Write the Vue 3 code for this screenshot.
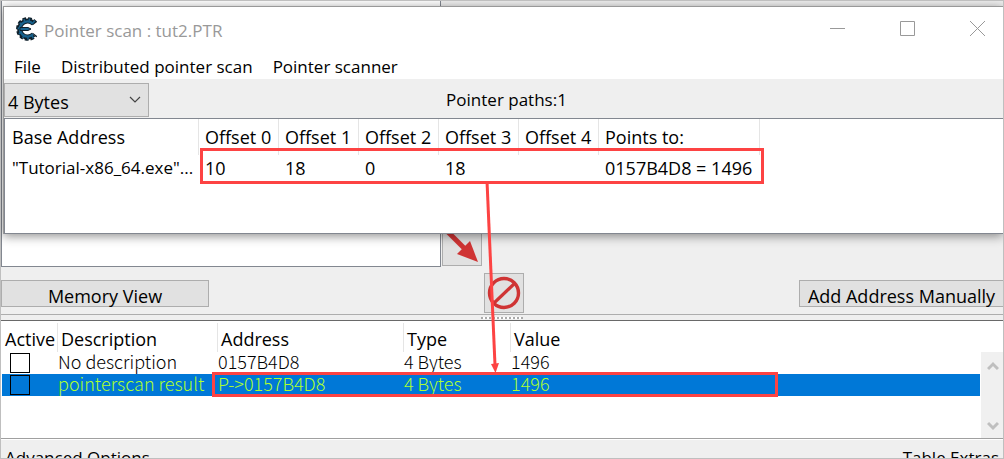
<script setup>
import { ref } from 'vue'

const valueType = ref('4 Bytes')
const valueTypes = ['Byte', '2 Bytes', '4 Bytes', '8 Bytes', 'Float', 'Double']
const menus = ['File', 'Distributed pointer scan', 'Pointer scanner']

const pathColumns = ['Base Address', 'Offset 0', 'Offset 1', 'Offset 2', 'Offset 3', 'Offset 4', 'Points to:']
const paths = [['"Tutorial-x86_64.exe"...', '10', '18', '0', '18', '', '0157B4D8 = 1496']]

const addressColumns = ['Active', 'Description', 'Address', 'Type', 'Value']
const entries = ref([
  { active: false, selected: false, description: 'No description', address: '0157B4D8', type: '4 Bytes', value: '1496' },
  { active: false, selected: true, description: 'pointerscan result', address: 'P->0157B4D8', type: '4 Bytes', value: '1496' }
])
</script>

<template>
  <div class="screen">
    <main class="main-window">
      <div class="results">
        <div class="found-list"></div>
        <button class="tool copy" type="button" aria-label="Add selected addresses">
          <svg width="38" height="38" viewBox="0 0 38 38">
            <path d="M3 3L22 22" stroke="#cf3434" stroke-width="5" />
            <path d="M27 14L14 27L35 35Z" fill="#cf3434" />
          </svg>
        </button>
      </div>

      <div class="actions">
        <button class="push memory" type="button">Memory View</button>
        <button class="tool stop" type="button" aria-label="Clear list">
          <svg width="38" height="38" viewBox="0 0 38 38">
            <circle cx="19" cy="19" r="14.5" fill="none" stroke="#cf3434" stroke-width="3.4" />
            <path d="M9 29L29 10" stroke="#cf3434" stroke-width="3.2" />
          </svg>
        </button>
        <button class="push manual" type="button">Add Address Manually</button>
      </div>

      <div class="splitter"><span class="grip"></span></div>

      <section class="address-list">
        <table class="address-table">
          <colgroup>
            <col class="c-active" /><col class="c-desc" /><col class="c-addr" /><col class="c-type" /><col />
          </colgroup>
          <thead>
            <tr><th v-for="c in addressColumns" :key="c" scope="col">{{ c }}</th></tr>
          </thead>
          <tbody>
            <tr v-for="e in entries" :key="e.description" :class="{ selected: e.selected }">
              <td class="tick"><input v-model="e.active" type="checkbox" :aria-label="'Active: ' + e.description" /></td>
              <td>{{ e.description }}</td>
              <td>{{ e.address }}</td>
              <td>{{ e.type }}</td>
              <td>{{ e.value }}</td>
            </tr>
          </tbody>
        </table>
        <div class="scrollbar">
          <button type="button" aria-label="Scroll up">
            <svg width="12" height="10" viewBox="0 0 12 10"><path d="M1 8L6 3L11 8" fill="none" stroke="#bfbfbf" stroke-width="3" /></svg>
          </button>
          <button type="button" aria-label="Scroll down">
            <svg width="12" height="10" viewBox="0 0 12 10"><path d="M1 2L6 7L11 2" fill="none" stroke="#bfbfbf" stroke-width="3" /></svg>
          </button>
        </div>
      </section>

      <footer class="footer">
        <a href="#advanced">Advanced Options</a>
        <a href="#extras">Table Extras</a>
      </footer>
    </main>

    <section class="scan-window">
      <header class="titlebar">
        <svg class="logo" width="22" height="24" viewBox="0 0 22 24">
          <g fill="none">
            <path d="M20 6.500A9 9 0 1 0 20 17.500" stroke="#10202b" stroke-width="5.600" stroke-dasharray="3.200 1.600" />
            <path d="M18.500 6.500A8 8 0 1 0 18.500 17.500" stroke="#10202b" stroke-width="5" />
            <path d="M20 6A9 9 0 1 0 20 18" stroke="#17618c" stroke-width="3.200" stroke-dasharray="1.400 3.400" stroke-dashoffset="-1" />
            <path d="M18 6.800A7.600 7.600 0 1 0 18 17.200" stroke="#17618c" stroke-width="2.400" />
          </g>
          <path d="M5 10.500H13L16 12L13 13.500H5Z" fill="#17618c" stroke="#10202b" />
        </svg>
        <h1>Pointer scan : tut2.PTR</h1>
        <div class="window-buttons">
          <button type="button" aria-label="Minimize">
            <svg width="15" height="15" viewBox="0 0 15 15"><path d="M0 7.5H15" stroke="#999" /></svg>
          </button>
          <button type="button" aria-label="Maximize">
            <svg width="15" height="15" viewBox="0 0 15 15"><path d="M.5 .5H14.5V14.5H.5Z" fill="none" stroke="#999" /></svg>
          </button>
          <button type="button" aria-label="Close">
            <svg width="15" height="15" viewBox="0 0 15 15"><path d="M0 0L15 15M15 0L0 15" stroke="#999" /></svg>
          </button>
        </div>
      </header>

      <nav class="menubar">
        <button v-for="m in menus" :key="m" type="button">{{ m }}</button>
      </nav>

      <div class="scan-toolbar">
        <div class="type-picker">
          <select v-model="valueType" aria-label="Value type">
            <option v-for="t in valueTypes" :key="t">{{ t }}</option>
          </select>
          <svg width="12" height="8" viewBox="0 0 12 8"><path d="M1 1L6 6L11 1" fill="none" stroke="#444" stroke-width="1.2" /></svg>
        </div>
        <output>Pointer paths:1</output>
      </div>

      <div class="path-list">
        <table class="path-table">
          <colgroup>
            <col class="c-base" /><col v-for="n in 5" :key="n" class="c-offset" /><col class="c-points" />
          </colgroup>
          <thead>
            <tr><th v-for="c in pathColumns" :key="c" scope="col">{{ c }}</th></tr>
          </thead>
          <tbody>
            <tr v-for="(row, r) in paths" :key="r">
              <td v-for="(cell, i) in row" :key="i">{{ cell }}</td>
            </tr>
          </tbody>
        </table>
      </div>
    </section>

    <svg class="notes" aria-hidden="true">
      <g fill="none" stroke="#fd4343" stroke-width="3">
        <rect x="201.5" y="149.5" width="561" height="33" />
        <rect x="213.5" y="373.5" width="563" height="22" />
        <path d="M487 181L495 365" />
      </g>
      <path d="M491 364L499 363L495.500 373Z" fill="#fd4343" />
    </svg>
  </div>
</template>

<style>
body {
  margin: 0;
}
</style>

<style scoped>
.screen,
.screen * {
  box-sizing: border-box;
}

.screen {
  position: relative;
  height: 100vh;
  overflow: hidden;
  border: 1px solid #bfbfbf;
  background: #efefef;
  color: #000;
  font: 400 18px/24px "Open Sans", "Noto Sans", sans-serif;
}

button,
select {
  margin: 0;
  padding: 0;
  border: 0;
  background: none;
  color: inherit;
  font: inherit;
}

svg {
  display: block;
}

.main-window {
  display: flex;
  flex-direction: column;
  height: 100%;
}

.results {
  display: flex;
  align-items: flex-end;
  gap: 1px;
  height: 266px;
}

.found-list {
  width: 440px;
  height: 100%;
  border: 1px solid #828790;
  border-top: 0;
  background: #fff;
}

.tool {
  width: 40px;
  height: 40px;
  border: 1px solid #adadad;
  background: #e1e1e1;
}

.copy {
  margin-bottom: 1px;
}

.actions {
  display: grid;
  grid-template-columns: 208px 275px 40px 1fr;
  align-items: center;
  height: 47px;
  padding-top: 5px;
}

.push {
  height: 27px;
  border: 1px solid #adadad;
  background: #e1e1e1;
  line-height: 30px;
}

.stop {
  grid-column: 3;
}

.manual {
  justify-self: end;
  width: 204px;
  border-right: 0;
}

.splitter {
  display: flex;
  justify-content: center;
  height: 7px;
  border-top: 1px solid #adadad;
  border-bottom: 1px solid #696969;
}

.grip {
  width: 42px;
  height: 2px;
  margin-top: 2px;
  background: repeating-linear-gradient(90deg, #aaa 0 2px, #fff 2px 4px);
}

.address-list {
  display: flex;
  flex: 1;
  min-height: 0;
  border-bottom: 1px solid #a0a0a0;
  background: #fff;
}

table {
  border-spacing: 0;
  table-layout: fixed;
}

th,
td {
  padding: 0;
  font-weight: inherit;
  text-align: left;
  white-space: nowrap;
}

.address-table {
  flex: 1;
  align-self: flex-start;
  width: 0;
  padding: 2px 0 0 1px;
}

.c-active {
  width: 56px;
}

.c-desc {
  width: 160px;
}

.c-addr {
  width: 186px;
}

.c-type {
  width: 107px;
}

.address-table th {
  height: 29px;
  padding: 4px 0 0 3px;
  border-right: 1px solid #e5e5e5;
  line-height: 25px;
}

.address-table th:last-child {
  border-right: 0;
}

.address-table td {
  height: 22px;
  padding-bottom: 4px;
  font-family: "Noto Sans CJK KR", sans-serif;
  font-weight: 300;
  line-height: 18px;
}

.address-table .tick {
  padding: 0 0 0 8px;
}

.tick input {
  display: block;
  width: 20px;
  height: 20px;
  margin: 0;
  border: 1px solid #000;
  appearance: none;
}

.selected {
  background: #0078d7;
  color: #adff2f;
}

.scrollbar {
  display: flex;
  flex-direction: column;
  justify-content: space-between;
  width: 22px;
  margin-top: 31px;
  margin-left: 1px;
  padding: 9px 0 7px 6px;
  background: #f0f0f0;
}

.footer {
  display: flex;
  flex: 0 0 19px;
  justify-content: space-between;
  overflow: hidden;
  border-top: 1px solid #fff;
  padding: 6px 4px 0;
  font-size: 17px;
}

.footer a {
  color: inherit;
  text-decoration: none;
}

.scan-window {
  position: absolute;
  top: 5px;
  right: 0;
  left: 2px;
  border: 1px solid #999;
  border-right: 0;
  border-bottom: 0;
  background: #fff;
  box-shadow: 0 2px 10px rgba(0, 0, 0, 0.45);
}

.titlebar {
  display: flex;
  align-items: center;
  height: 48px;
  padding: 0 18px 0 11px;
  color: #999;
}

.titlebar h1 {
  flex: 1;
  margin: 0 0 0 7px;
  font: inherit;
  font-size: 17px;
}

.logo {
  margin-bottom: 5px;
}

.window-buttons {
  display: flex;
  gap: 55px;
  margin-bottom: 5px;
}

.menubar {
  display: flex;
  gap: 20px;
  height: 24px;
  padding-left: 10px;
  font-size: 17px;
}

.scan-toolbar {
  display: grid;
  grid-template-columns: 1fr auto 1fr;
  align-items: center;
  height: 39px;
  background: #efefef;
}

.scan-toolbar output {
  padding-left: 6px;
  font-size: 17px;
  line-height: 42px;
}

.type-picker {
  display: flex;
  align-items: center;
  width: 145px;
}

.type-picker select {
  width: 100%;
  height: 34px;
  padding: 3px 24px 0 3px;
  border: 1px solid #adadad;
  background: #e1e1e1;
  appearance: none;
}

.type-picker svg {
  flex: none;
  margin-left: -20px;
  pointer-events: none;
}

.path-list {
  height: 116px;
  border: 1px solid #828790;
  border-width: 1px 0 1px 1px;
}

.path-table {
  width: 755px;
}

.c-base {
  width: 194px;
}

.c-offset {
  width: 80px;
}

.path-table th {
  height: 32px;
  padding-left: 6px;
  border-right: 1px solid #e5e5e5;
  line-height: 36px;
}

.path-table td {
  height: 26px;
  padding-left: 6px;
  line-height: 26px;
}

.path-table th:first-child,
.path-table td:first-child {
  padding-left: 7px;
}

.path-table td:first-child {
  font-size: 17px;
}

.notes {
  position: absolute;
  top: -1px;
  left: -1px;
  width: 100%;
  height: 100%;
  pointer-events: none;
}
</style>
